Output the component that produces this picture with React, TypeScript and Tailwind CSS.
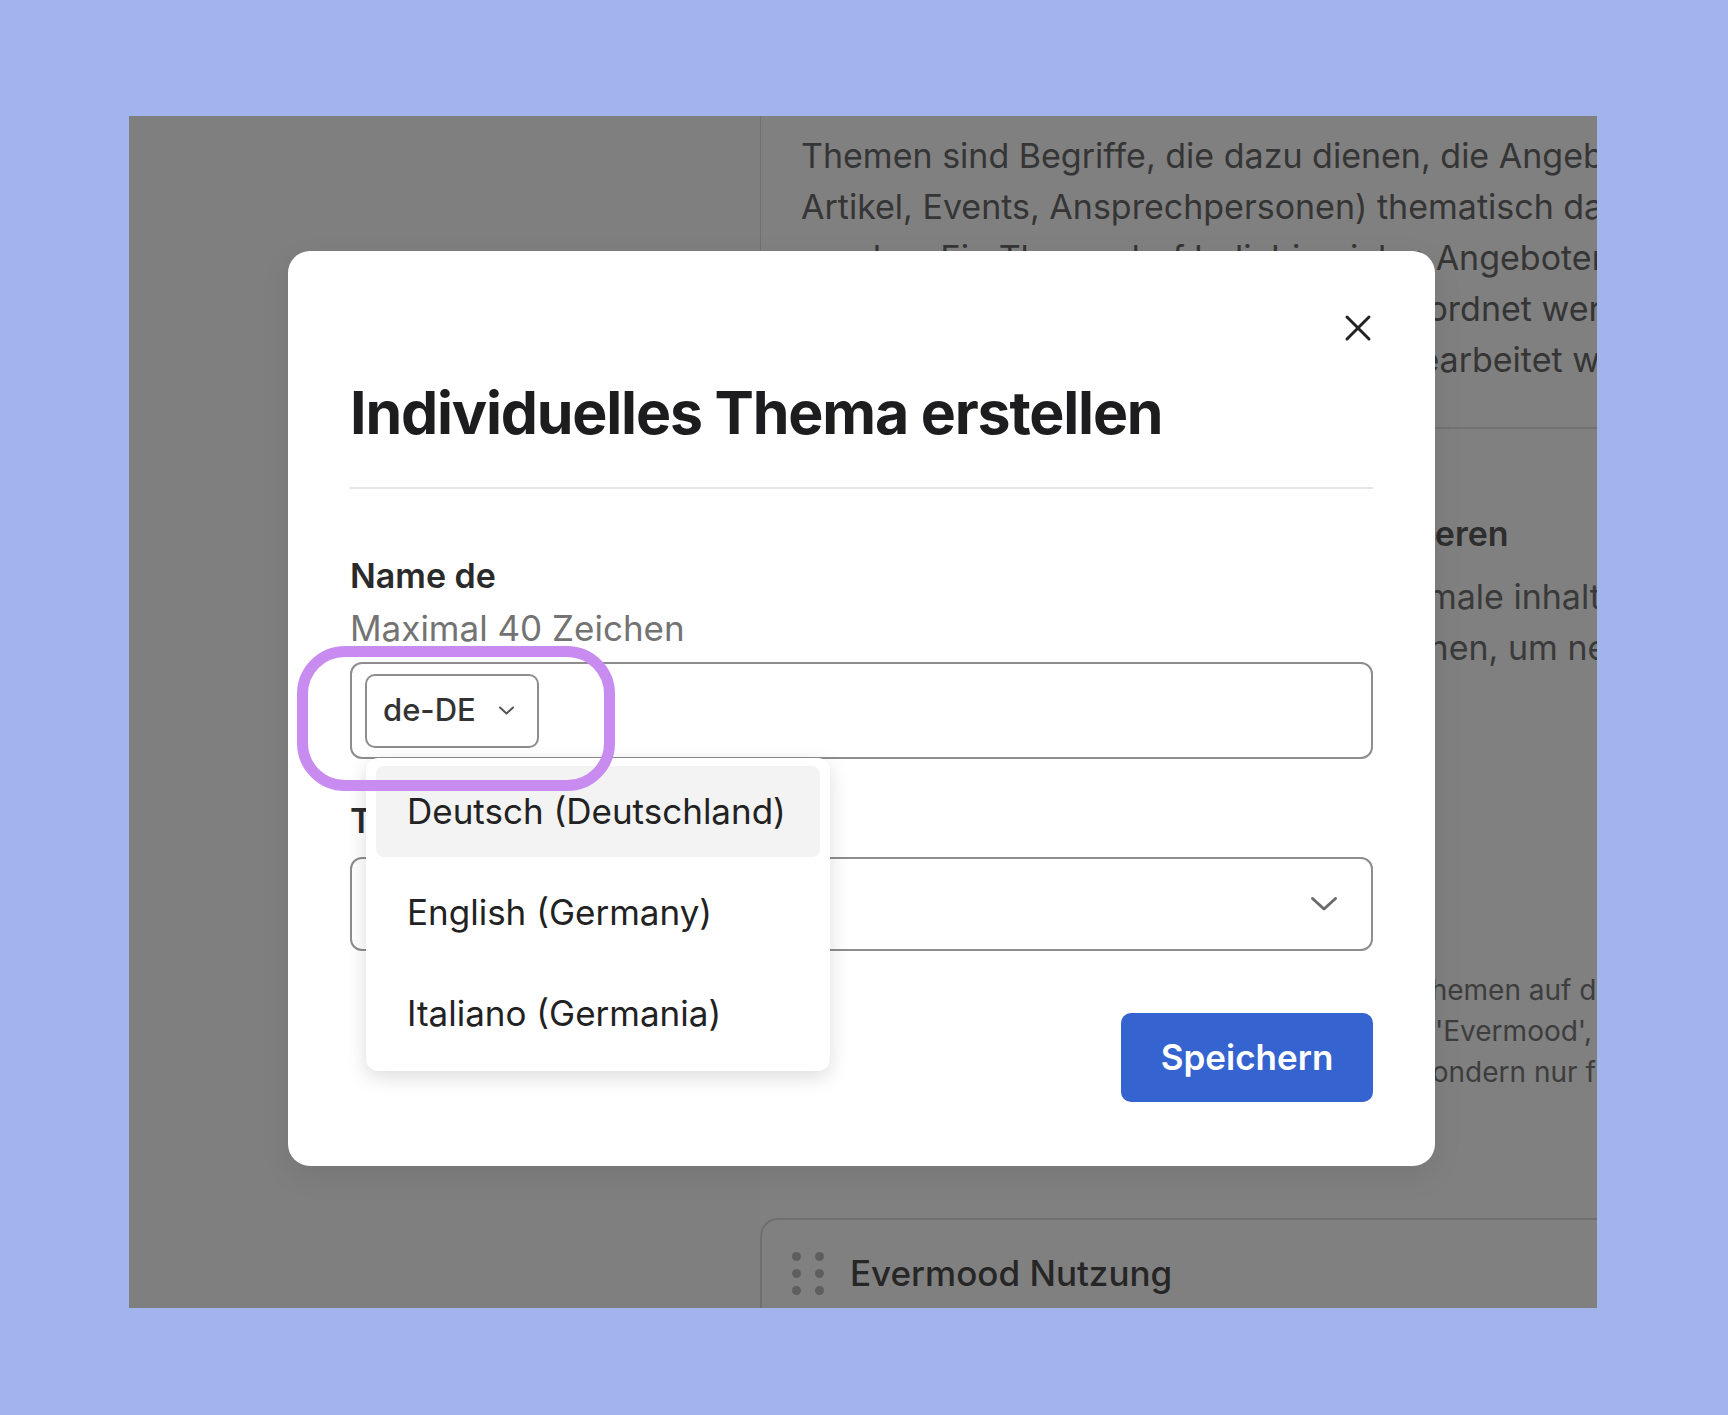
import React from "react";

function CloseIcon() {
  return (
    <svg width="28" height="28" viewBox="0 0 28 28" fill="none">
      <path d="M3 3L25 25M25 3L3 25" stroke="#222" strokeWidth="3" strokeLinecap="round" />
    </svg>
  );
}

function SmallChevron() {
  return (
    <svg width="17" height="11" viewBox="0 0 17 11" fill="none">
      <path d="M2 2.5L8.5 8.5L15 2.5" stroke="#555" strokeWidth="2" strokeLinecap="round" strokeLinejoin="round" />
    </svg>
  );
}

function BigChevron() {
  return (
    <svg width="28" height="16" viewBox="0 0 28 16" fill="none">
      <path d="M2.5 2.5L14 13L25.5 2.5" stroke="#6b6b6b" strokeWidth="3" strokeLinecap="round" strokeLinejoin="round" />
    </svg>
  );
}

function DragDots() {
  return (
    <div className="grid grid-cols-2 gap-x-[14px] gap-y-[8px]">
      {[0, 1, 2, 3, 4, 5].map((i) => (
        <span key={i} className="block w-[9px] h-[9px] rounded-full bg-[#5e5e5e]" />
      ))}
    </div>
  );
}

export default function App() {
  return (
    <div className="w-[1728px] h-[1415px] bg-[#a1b5ec] pt-[116px] pl-[129px] font-['Inter',sans-serif]">
      <div className="relative w-[1468px] h-[1192px] overflow-hidden flex bg-[#808080]">
        {/* left column */}
        <div className="w-[631px] shrink-0 bg-[#7f7f7f]" />

        {/* right column */}
        <div className="flex-1 min-w-0 flex flex-col">
          <div className="h-[1034px] shrink-0 border-l border-[#707070] flex flex-col">
            <div className="pl-[40px] pt-[14px] text-[34px] leading-[51px] text-[#353535] whitespace-nowrap">
              <div>Themen sind Begriffe, die dazu dienen, die Angebote (z.B.</div>
              <div>Artikel, Events, Ansprechpersonen) thematisch darzustellen</div>
              <div>werden. Ein Thema darf beliebig vielen Angeboten zugewiesen</div>
              <div>oder allen Angeboten gleichzeitig zugeordnet werden. Themen</div>
              <div>können jederzeit angelegt oder auch bearbeitet werden.</div>
            </div>
            <div className="mt-[42px] h-[2px] bg-[#727272]" />
            <div className="pl-[40px] pt-[79px] whitespace-nowrap">
              <div className="text-[34px] leading-[51px] font-semibold text-[#2e2e2e]">
                Themen für Ihre Abteilung individualisieren
              </div>
              <div className="mt-[12px] text-[34px] leading-[51px] text-[#3a3a3a]">
                <div>Erstellen Sie neue Themen, um die optimale inhaltliche</div>
                <div>zu gliedern und alle Angebote zu versehen, um neue</div>
              </div>
              <div className="mt-[297px] text-[28px] leading-[41px] text-[#3d3d3d]">
                <div>Hinweis Individuelle Themen werden nicht als Themen auf der</div>
                <div>Startseite angezeigt und erscheinen nicht unter 'Evermood',</div>
                <div>sie sind nicht öffentlich für Nutzende sichtbar, sondern nur für Ihr Team.</div>
              </div>
            </div>
          </div>

          <div className="mt-[68px] flex-1 border-l-2 border-t-2 border-[#6f6f6f] rounded-tl-[18px] pt-[32px] pl-[30px]">
            <div className="flex items-center h-[42px] gap-[26px]">
              <DragDots />
              <span className="text-[35px] font-medium text-[#262626]">Evermood Nutzung</span>
            </div>
          </div>
        </div>

        {/* modal */}
        <div className="absolute left-[159px] top-[135px] w-[1147px] bg-white rounded-[22px] px-[62px] pt-[63px] pb-[64px] flex flex-col shadow-[0_10px_30px_rgba(0,0,0,0.08)]">
          <div className="flex justify-end h-[28px] pr-[1px]">
            <CloseIcon />
          </div>
          <h2 className="mt-[35px] text-[59px] leading-[72px] font-bold tracking-[-0.02em] text-[#1d1d1f]">
            Individuelles Thema erstellen
          </h2>
          <div className="mt-[38px] h-[2px] bg-[#e6e6e6]" />

          <div className="mt-[66px] text-[34px] leading-[42px] font-semibold text-[#2a2a2a]">Name de</div>
          <div className="mt-[10px] text-[35px] leading-[42px] text-[#737373]">Maximal 40 Zeichen</div>

          <div className="relative mt-[13px]">
            <div className="h-[97px] border-2 border-[#8d8d8d] rounded-[12px] pl-[13px] flex items-center">
              <div className="h-[74px] w-[174px] border-2 border-[#8d8d8d] rounded-[10px] flex items-center pl-[16px] gap-[22px] bg-white">
                <span className="text-[31px] font-medium text-[#333]">de-DE</span>
                <SmallChevron />
              </div>
            </div>

            {/* dropdown menu */}
            <div className="absolute left-[16px] top-[96px] w-[464px] z-10 bg-white rounded-[12px] pt-[8px] pb-[12px] px-[10px] flex flex-col gap-[10px] shadow-[0_6px_20px_rgba(0,0,0,0.14)]">
              <div className="h-[91px] pl-[31px] flex items-center rounded-[8px] bg-[#f3f3f3] text-[35px] text-[#222]">
                Deutsch (Deutschland)
              </div>
              <div className="h-[91px] pl-[31px] flex items-center rounded-[8px] text-[35px] text-[#222]">
                English (Germany)
              </div>
              <div className="h-[91px] pl-[31px] flex items-center rounded-[8px] text-[35px] text-[#222]">
                Italiano (Germania)
              </div>
            </div>

            {/* highlight ring */}
            <div className="absolute left-[-53px] top-[-16px] w-[318px] h-[145px] z-20 border-[11px] border-[#c88cf0] rounded-[48px] pointer-events-none" />
          </div>

          <div className="mt-[41px] text-[34px] leading-[42px] font-semibold text-[#2a2a2a]">Themenbereich</div>
          <div className="mt-[15px] h-[94px] border-2 border-[#8d8d8d] rounded-[12px] flex items-center justify-end pr-[33px]">
            <BigChevron />
          </div>

          <div className="mt-[62px] flex justify-end">
            <button className="w-[252px] h-[89px] bg-[#3563cf] rounded-[10px] text-white text-[35px] font-semibold">
              Speichern
            </button>
          </div>
        </div>
      </div>
    </div>
  );
}
